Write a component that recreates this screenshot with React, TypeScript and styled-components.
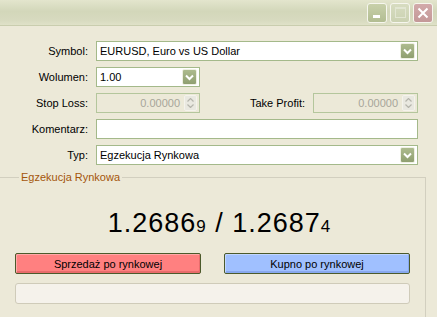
import styled, { createGlobalStyle } from 'styled-components'

const GlobalStyle = createGlobalStyle`
  html, body {
    margin: 0;
    padding: 0;
    background: #ece9d8;
    overflow: hidden;
  }
  body {
    font-family: "Liberation Sans", Arial, sans-serif;
    font-size: 11px;
    color: #000;
  }
`

const Window = styled.div`
  width: 437px;
  height: 317px;
  background: #ece9d8;
  display: flex;
  flex-direction: column;
`

const TitleBar = styled.div`
  height: 26px;
  flex: none;
  box-sizing: border-box;
  border-bottom: 1px solid #c9cdae;
  background: linear-gradient(#e3e5cd, #d3d7ba 45%, #d7dabf 80%, #dfe1c8);
  display: flex;
  justify-content: flex-end;
  align-items: center;
  gap: 3px;
  padding-right: 4px;
`

const CaptionButton = styled.div<{ $kind: 'min' | 'max' | 'close' }>`
  width: 20px;
  height: 20px;
  box-sizing: border-box;
  border: 1px solid #f6f6ee;
  border-radius: 3px;
  position: relative;
  display: flex;
  align-items: center;
  justify-content: center;
  background: ${(p) =>
    p.$kind === 'close'
      ? 'linear-gradient(#d2aaaa, #c49898)'
      : p.$kind === 'max'
        ? 'linear-gradient(#d7dcc0, #cbd2b2)'
        : 'linear-gradient(#c8d0aa, #b2bd92)'};
`

const MinGlyph = styled.div`
  position: absolute;
  left: 5px;
  bottom: 4px;
  width: 7px;
  height: 3px;
  background: #fff;
`

const MaxGlyph = styled.div`
  width: 9px;
  height: 8px;
  border: 1px solid #e2e6d2;
  border-top-width: 2px;
`

const Form = styled.div`
  display: grid;
  grid-template-columns: 88px 104px 97px 105px;
  grid-auto-rows: 20px;
  column-gap: 8px;
  row-gap: 6px;
  padding: 15px 19px 0 0;
`

const Label = styled.div`
  display: flex;
  align-items: center;
  justify-content: flex-end;
  white-space: nowrap;
`

const Field = styled.div<{ $span?: number; $disabled?: boolean }>`
  grid-column: span ${(p) => p.$span ?? 1};
  box-sizing: border-box;
  border: 1px solid ${(p) => (p.$disabled ? '#b4c69c' : '#a4b98a')};
  background: ${(p) => (p.$disabled ? '#ece9d8' : '#fff')};
  color: ${(p) => (p.$disabled ? '#a7a69a' : '#000')};
  display: flex;
  align-items: center;
  padding: 0 2px 0 3px;
  white-space: nowrap;
`

const FieldText = styled.span<{ $right?: boolean }>`
  flex: 1;
  text-align: ${(p) => (p.$right ? 'right' : 'left')};
  padding-right: ${(p) => (p.$right ? '4px' : '0')};
`

const DropButton = styled.div`
  width: 15px;
  height: 16px;
  box-sizing: border-box;
  border: 1px solid #eef0e2;
  border-radius: 2px;
  background: linear-gradient(#adbb8e, #8f9f70);
  display: flex;
  align-items: center;
  justify-content: center;
`

const Spinner = styled.div`
  width: 13px;
  height: 16px;
  box-sizing: border-box;
  border: 1px solid #f4f3ec;
  border-radius: 2px;
  background: #e9e8e0;
  display: flex;
  flex-direction: column;
  align-items: center;
  justify-content: space-around;
  padding: 1px 0;
`

const Group = styled.fieldset`
  margin: 6px 11px 0 -2px;
  padding: 0 15px 0 16px;
  border: 1px solid #d2cfbf;
  border-bottom: none;
  flex: 1;
  min-width: 0;
`

const Legend = styled.legend`
  color: #a4560b;
  padding: 0 2px;
  margin-left: 4px;
  line-height: 13px;
  font-size: 11px;
`

const Price = styled.div`
  margin-top: 24px;
  height: 30px;
  line-height: 30px;
  font-size: 27px;
  letter-spacing: 1px;
  text-align: center;
  padding-left: 14px;
  white-space: nowrap;
`

const SmallDigit = styled.span`
  font-size: 17px;
`

const Buttons = styled.div`
  margin-top: 15px;
  display: grid;
  grid-template-columns: 186px 186px;
  justify-content: space-between;
`

const TradeButton = styled.div<{ $side: 'sell' | 'buy' }>`
  height: 21px;
  box-sizing: border-box;
  border: 1px solid #4b5a2b;
  border-radius: 2px;
  display: flex;
  align-items: center;
  justify-content: center;
  background: ${(p) => (p.$side === 'sell' ? '#ff8080' : '#a0c0ff')};
  box-shadow:
    inset 1px 1px 0 ${(p) => (p.$side === 'sell' ? '#ffa8a8' : '#c2d6ff')},
    inset -1px -2px 0 ${(p) => (p.$side === 'sell' ? '#e86c6c' : '#88a8ee')};
`

const StatusBar = styled.div`
  margin-top: 9px;
  height: 21px;
  box-sizing: border-box;
  border: 1px solid #cfcbb9;
  border-radius: 3px;
  background: #f5f2eb;
`

const Chevron = () => (
  <svg width="9" height="7" viewBox="0 0 9 7">
    <path d="M1 1.5 L4.5 5 L8 1.5" fill="none" stroke="#fff" strokeWidth="2" />
  </svg>
)

const SpinArrow = ({ up }: { up?: boolean }) => (
  <svg width="7" height="4" viewBox="0 0 7 4">
    <path d={up ? 'M0.5 3.5 L3.5 0.5 L6.5 3.5' : 'M0.5 0.5 L3.5 3.5 L6.5 0.5'} fill="none" stroke="#b5b5ac" strokeWidth="1.2" />
  </svg>
)

const CloseGlyph = () => (
  <svg width="12" height="12" viewBox="0 0 12 12">
    <path d="M1.5 1.5 L10.5 10.5 M10.5 1.5 L1.5 10.5" stroke="#fff" strokeWidth="2" />
  </svg>
)

const SpinField = () => (
  <Field $disabled>
    <FieldText $right>0.00000</FieldText>
    <Spinner>
      <SpinArrow up />
      <SpinArrow />
    </Spinner>
  </Field>
)

const App = () => {
  return (
    <Window>
      <GlobalStyle />
      <TitleBar>
        <CaptionButton $kind="min">
          <MinGlyph />
        </CaptionButton>
        <CaptionButton $kind="max">
          <MaxGlyph />
        </CaptionButton>
        <CaptionButton $kind="close">
          <CloseGlyph />
        </CaptionButton>
      </TitleBar>

      <Form>
        <Label>Symbol:</Label>
        <Field $span={3}>
          <FieldText>EURUSD, Euro vs US Dollar</FieldText>
          <DropButton>
            <Chevron />
          </DropButton>
        </Field>

        <Label>Wolumen:</Label>
        <Field>
          <FieldText>1.00</FieldText>
          <DropButton>
            <Chevron />
          </DropButton>
        </Field>
        <div />
        <div />

        <Label>Stop Loss:</Label>
        <SpinField />
        <Label>Take Profit:</Label>
        <SpinField />

        <Label>Komentarz:</Label>
        <Field $span={3} />

        <Label>Typ:</Label>
        <Field $span={3}>
          <FieldText>Egzekucja Rynkowa</FieldText>
          <DropButton>
            <Chevron />
          </DropButton>
        </Field>
      </Form>

      <Group>
        <Legend>Egzekucja Rynkowa</Legend>
        <Price>
          1.2686<SmallDigit>9</SmallDigit> / 1.2687<SmallDigit>4</SmallDigit>
        </Price>
        <Buttons>
          <TradeButton $side="sell">Sprzedaż po rynkowej</TradeButton>
          <TradeButton $side="buy">Kupno po rynkowej</TradeButton>
        </Buttons>
        <StatusBar />
      </Group>
    </Window>
  )
}

export default App
